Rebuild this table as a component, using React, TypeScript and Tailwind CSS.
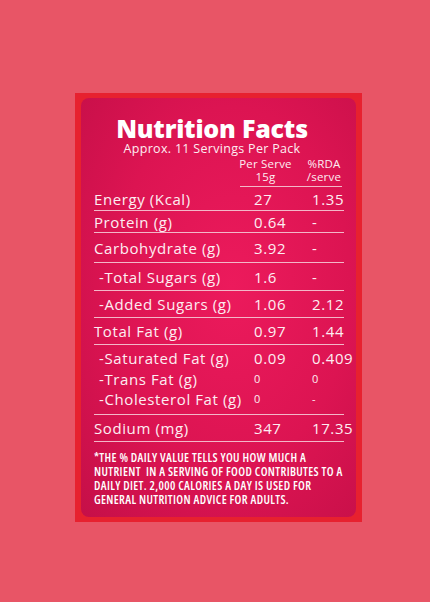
type Item = { label: string; value: string; rda: string; indent?: boolean; smallVal?: boolean };

function Row({ item, className }: { item: Item; className: string }) {
  return (
    <div className={`flex items-center whitespace-nowrap ${className}`}>
      <span className={`w-[160px] shrink-0 ${item.indent ? "pl-[5px]" : ""}`}>{item.label}</span>
      <span className={`w-[58px] shrink-0 ${item.smallVal ? "text-[11px]" : ""}`}>{item.value}</span>
      <span className={`${item.smallVal ? "text-[11px]" : ""}`}>{item.rda}</span>
    </div>
  );
}

export default function App() {
  const line = "border-b border-[#f3b7c8]";

  return (
    <div
      className="w-[430px] h-[602px] bg-[#e85566] pl-[75px] pt-[93px]"
      style={{ fontFamily: '"Open Sans", "Noto Sans", sans-serif' }}
    >
      <div className="w-[287px] h-[429px] bg-[#e7212f] pl-[6px] pr-[6px] pt-[5px] pb-[5px]">
        <div className="w-full h-full rounded-[8px] bg-[radial-gradient(ellipse_at_55%_45%,#ec1a5c_0%,#dc1452_55%,#c50f48_100%)] text-[#fdeef2] px-[13px] pr-[12px]">
          <div className="flex flex-col items-center pt-[16px] pr-[14px]">
            <h1 className="text-[25px] leading-[28px] font-extrabold tracking-[-0.2px] text-white">Nutrition Facts</h1>
            <p className="text-[12.5px] leading-[14px] tracking-[0.3px]">Approx. 11 Servings Per Pack</p>
          </div>

          <div className="flex text-[11.5px] leading-[13px] mt-[1px] whitespace-nowrap tracking-[0.2px]">
            <div className="w-[146px] shrink-0" />
            <div className="w-[51px] shrink-0 flex flex-col items-center">
              <span className="h-[13px]">Per Serve</span>
              <span className="h-[13px]">15g</span>
            </div>
            <div className="flex-1 pl-[13px] flex flex-col items-center">
              <span className="h-[13px]">%RDA</span>
              <span className="h-[13px]">/serve</span>
            </div>
          </div>
          <div className={`ml-[146px] mr-[2px] mt-[3px] ${line}`} />

          <div className="text-[15px] leading-[18px] tracking-[0.6px]">
            <Row item={{ label: "Energy (Kcal)", value: "27", rda: "1.35" }} className={`h-[24px] ${line}`} />
            <Row item={{ label: "Protein (g)", value: "0.64", rda: "-" }} className={`h-[22px] ${line}`} />
            <Row item={{ label: "Carbohydrate (g)", value: "3.92", rda: "-" }} className={`h-[30px] ${line}`} />
            <Row item={{ label: "-Total Sugars (g)", value: "1.6", rda: "-", indent: true }} className={`h-[28px] ${line}`} />
            <Row item={{ label: "-Added Sugars (g)", value: "1.06", rda: "2.12", indent: true }} className={`h-[27px] ${line}`} />
            <Row item={{ label: "Total Fat (g)", value: "0.97", rda: "1.44" }} className={`h-[27px] ${line}`} />
            <div className={`flex flex-col pt-[3px] h-[70px] ${line}`}>
              <Row item={{ label: "-Saturated Fat (g)", value: "0.09", rda: "0.409", indent: true }} className="h-[20px]" />
              <Row item={{ label: "-Trans Fat (g)", value: "0", rda: "0", indent: true, smallVal: true }} className="h-[21px]" />
              <Row item={{ label: "-Cholesterol Fat (g)", value: "0", rda: "-", indent: true, smallVal: true }} className="h-[20px]" />
            </div>
            <Row item={{ label: "Sodium (mg)", value: "347", rda: "17.35" }} className={`h-[27px] ${line}`} />
          </div>

          <p
            className="mt-[9px] text-[12px] leading-[14px] font-semibold uppercase tracking-[0.35px] text-white font-stretch-condensed whitespace-nowrap"
            style={{ fontFamily: '"Liberation Sans Narrow", "Open Sans", sans-serif' }}
          >
            *The % daily value tells you how much a
            <br />
            nutrient&nbsp; in a serving of food contributes to a
            <br />
            daily diet. 2,000 calories a day is used for
            <br />
            general nutrition advice for adults.
          </p>
        </div>
      </div>
    </div>
  );
}
